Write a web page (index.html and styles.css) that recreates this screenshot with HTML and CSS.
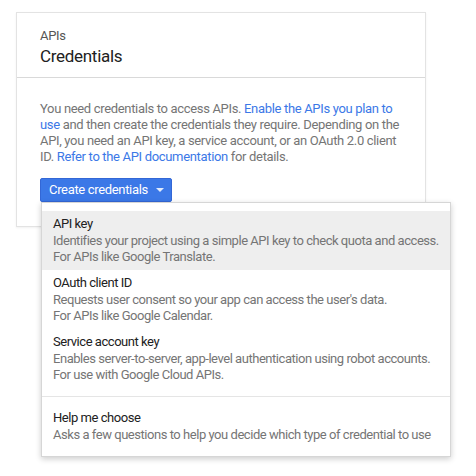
FILE: index.html
```html
<!DOCTYPE html>
<html>
<head>
<meta charset="utf-8">
<link rel="stylesheet" href="styles.css">
</head>
<body>
<div class="card">
  <div class="card-header">
    <div class="eyebrow">APIs</div>
    <div class="title">Credentials</div>
  </div>
  <div class="card-body">
    <p class="intro">You need credentials to access APIs. <a href="#">Enable the APIs you plan to use</a> and then create the credentials they require. Depending on the API, you need an API key, a service account, or an OAuth 2.0 client ID. <a href="#">Refer to the API documentation</a> for details.</p>
    <div class="btn-wrap">
      <button class="btn">Create credentials<span class="caret"></span></button>
      <div class="menu">
        <div class="menu-group">
          <div class="item active">
            <div class="item-title">API key</div>
            <div class="item-desc">Identifies your project using a simple API key to check quota and access.<br>For APIs like Google Translate.</div>
          </div>
          <div class="item">
            <div class="item-title">OAuth client ID</div>
            <div class="item-desc">Requests user consent so your app can access the user's data.<br>For APIs like Google Calendar.</div>
          </div>
          <div class="item">
            <div class="item-title">Service account key</div>
            <div class="item-desc">Enables server-to-server, app-level authentication using robot accounts.<br>For use with Google Cloud APIs.</div>
          </div>
        </div>
        <div class="menu-group">
          <div class="item">
            <div class="item-title">Help me choose</div>
            <div class="item-desc">Asks a few questions to help you decide which type of credential to use</div>
          </div>
        </div>
      </div>
    </div>
  </div>
</div>
</body>
</html>
```
FILE: styles.css
```css
html, body {
  margin: 0;
  padding: 0;
  background: #fff;
}
body {
  min-height: 476px;
  font-family: Roboto, "Liberation Sans", Arial, sans-serif;
  font-size: 13px;
  line-height: 16px;
  letter-spacing: -0.33px;
  color: #212121;
}
.card {
  margin: 12px 0 0 16px;
  width: 408px;
  height: 213px;
  border: 1px solid #e3e3e3;
  box-shadow: 0 1px 2px rgba(0,0,0,0.06);
}
.card-header {
  padding: 15px 23px 9px;
  border-bottom: 1px solid #d9d9d9;
}
.eyebrow {
  font-size: 13px;
  line-height: 16px;
  color: #555;
}
.title {
  font-size: 17px;
  line-height: 24px;
  letter-spacing: -0.3px;
  color: #212121;
}
.card-body {
  padding: 23px 23px 0;
}
.intro {
  margin: 0;
  color: #757575;
  font-size: 13px;
  line-height: 16px;
}
.intro a {
  color: #3b78e7;
  text-decoration: none;
}
.btn-wrap {
  position: relative;
  display: inline-block;
  margin-top: 13px;
}
.btn {
  display: flex;
  align-items: center;
  height: 24px;
  padding: 0 7px 0 8px;
  border: 1px solid #3367d6;
  border-radius: 2px;
  background: #3b78e7;
  color: #fff;
  font-family: Roboto, "Liberation Sans", Arial, sans-serif;
  font-size: 13px;
  line-height: 16px;
  letter-spacing: -0.33px;
  box-sizing: border-box;
}
.caret {
  width: 0;
  height: 0;
  margin-left: 8px;
  border-left: 4px solid transparent;
  border-right: 4px solid transparent;
  border-top: 4px solid #fff;
  opacity: 0.85;
}
.menu {
  position: absolute;
  left: 1px;
  top: 100%;
  width: 408px;
  background: #fff;
  border: 1px solid #d6d6d6;
  box-shadow: 0 2px 6px rgba(0,0,0,0.2);
}
.menu-group {
  padding: 8px 0;
}
.menu-group + .menu-group {
  border-top: 1px solid #e5e5e5;
}
.item {
  padding: 5px 11px;
  white-space: nowrap;
  letter-spacing: -0.46px;
}
.item.active {
  background: #eeeeee;
}
.item-title {
  color: #212121;
  margin-bottom: 1px;
}
.item-desc {
  color: #757575;
}
```
